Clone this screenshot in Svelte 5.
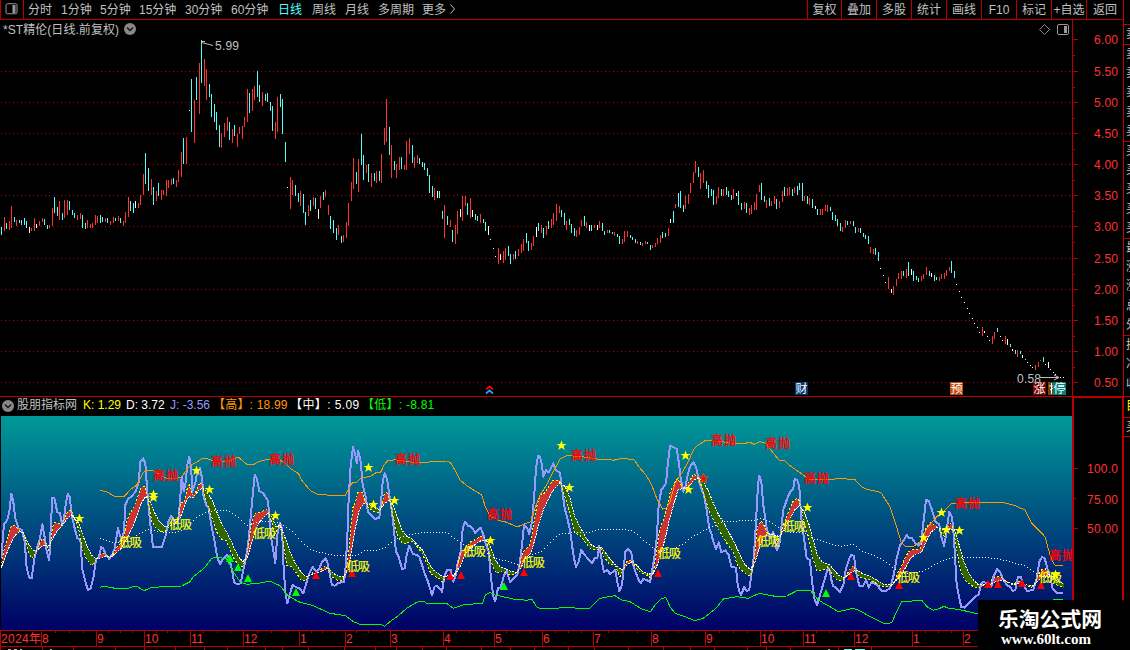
<script>
  const periods = [
    ['分时', 33], ['1分钟', 39], ['5分钟', 39], ['15分钟', 46], ['30分钟', 46], ['60分钟', 47],
    ['日线', 34], ['周线', 33], ['月线', 33], ['多周期', 44], ['更多', 27],
  ];
  const tools = ['复权', '叠加', '多股', '统计', '画线', 'F10', '标记', '+自选', '返回'];

  // x, high, low, kind (r = up, c = down, w = flat)
  const bars = `1,227,235,c 4,217,231,r 6,223,229,c 9,221,230,r 11,206,228,r 14,217,222,c 16,220,226,r 19,220,223,c 21,220,225,c 24,218,225,c 26,221,228,c 29,227,233,w 31,228,231,r 34,218,231,r 36,224,228,w 39,221,226,r 42,218,222,r 44,219,225,c 47,225,229,c 49,225,228,r 52,208,226,r 54,197,213,c 57,207,216,c 59,201,220,r 62,213,220,c 64,200,218,r 67,200,215,r 69,201,210,c 72,210,215,c 74,213,218,c 77,215,220,r 80,213,219,r 82,215,228,c 85,223,229,c 87,220,228,r 90,224,228,r 92,223,228,r 95,215,225,r 97,216,223,r 100,215,223,c 102,217,222,c 105,218,222,r 107,218,223,c 110,221,225,r 113,217,223,r 115,218,221,c 118,216,221,r 120,218,223,c 123,221,226,r 125,212,223,r 128,197,217,r 130,201,211,c 133,203,213,c 135,201,208,w 138,203,208,r 140,195,205,r 143,174,195,r 145,153,184,c 148,168,191,c 151,179,195,r 153,187,205,c 156,191,201,r 158,183,196,c 161,190,200,r 163,190,195,r 166,180,196,r 168,180,188,r 171,179,185,r 173,178,184,c 176,180,187,r 178,170,182,r 181,152,177,r 183,138,164,c 186,137,164,r 189,110,111,w 191,79,132,c 194,100,143,r 196,77,100,c 199,63,114,r 201,40,83,c 204,59,86,r 206,69,100,r 209,84,97,c 211,94,117,c 214,104,122,c 216,112,130,c 219,125,147,c 221,133,148,r 224,123,137,r 227,117,131,r 229,122,140,c 232,129,143,r 234,125,136,c 237,134,147,r 239,127,134,r 242,126,139,r 244,117,127,r 247,89,122,r 249,93,113,c 252,89,111,r 254,86,100,r 257,71,97,c 259,85,102,c 262,92,106,r 265,94,101,c 267,93,102,c 270,102,111,c 272,106,131,c 275,122,139,r 277,97,132,r 280,94,107,c 282,99,134,c 285,142,162,c 287,187,188,w 290,177,209,r 292,180,195,r 295,185,196,c 298,193,202,c 300,191,206,r 303,194,213,c 305,212,225,c 308,205,216,r 310,200,211,c 313,197,206,r 315,198,209,c 318,209,219,w 320,196,208,r 323,192,200,c 325,190,197,r 328,205,215,r 330,216,229,c 333,220,233,c 336,228,240,c 338,225,235,r 341,236,243,c 343,235,242,r 346,222,238,r 348,203,226,r 351,182,201,r 353,158,189,r 356,172,184,c 358,159,192,r 361,134,165,c 363,155,180,c 366,165,173,r 368,164,182,c 371,173,187,r 374,173,181,c 376,171,183,r 379,171,181,c 381,154,183,r 384,128,145,r 386,99,142,r 389,127,155,c 391,145,178,r 394,161,170,c 396,164,178,r 399,157,170,r 401,157,169,c 404,165,170,r 406,141,170,r 409,138,154,r 412,145,163,c 414,157,168,r 417,155,163,r 419,158,164,c 422,162,167,c 424,163,170,c 427,168,176,c 429,175,193,c 432,186,197,c 434,188,200,r 437,191,198,w 439,191,198,c 442,211,219,c 444,205,238,r 447,216,225,c 450,220,227,r 452,230,242,c 455,225,244,r 457,211,234,r 460,209,217,w 462,196,221,r 465,196,206,r 467,203,215,c 470,198,218,r 472,210,217,w 475,214,220,c 477,216,221,c 480,214,223,r 483,219,223,c 485,222,231,c 488,226,235,w 490,239,240,w 493,248,249,w 495,256,257,w 498,248,264,r 500,254,260,w 503,251,263,r 505,248,260,r 508,246,256,c 510,254,264,c 513,254,260,r 515,251,259,c 518,249,256,r 521,244,253,r 523,239,251,r 526,233,243,c 528,241,251,c 531,243,250,r 533,236,246,r 536,227,237,w 538,223,231,c 541,225,233,r 543,228,238,c 546,226,235,r 548,221,229,c 551,219,228,r 553,213,225,r 556,204,221,r 559,206,213,r 561,210,217,c 564,213,225,c 566,221,230,r 569,219,225,c 571,224,233,c 574,228,236,c 576,230,237,r 579,227,235,r 581,220,226,r 584,216,226,c 586,222,228,r 589,225,231,w 591,225,231,c 594,225,228,r 597,225,230,w 599,221,228,r 602,223,231,c 604,231,235,c 607,230,233,r 609,230,233,c 612,232,234,c 614,232,236,r 617,234,237,c 619,236,244,c 622,239,244,r 624,231,242,r 627,231,237,r 630,235,238,c 632,237,240,c 635,239,243,c 637,241,244,r 640,242,245,c 642,243,246,r 645,241,244,r 647,242,244,c 650,245,250,c 652,245,248,r 655,243,247,r 657,238,244,r 660,235,243,r 662,232,238,c 665,233,237,c 668,228,236,r 670,219,223,w 673,211,223,c 675,204,208,r 678,193,207,c 680,191,208,c 683,205,212,c 685,196,209,r 688,194,204,r 690,183,193,r 693,172,183,r 695,161,173,r 698,167,177,c 700,173,189,r 703,170,183,r 706,181,189,c 708,185,198,c 711,189,196,c 713,190,205,c 716,196,204,r 718,187,198,r 721,189,196,c 723,189,196,r 726,187,195,c 728,191,197,c 731,195,200,c 733,189,199,r 736,193,196,w 738,191,205,c 741,203,210,c 744,202,209,r 746,203,213,c 749,208,215,r 751,205,214,r 754,202,210,r 756,194,210,r 759,185,192,r 761,183,200,c 764,196,202,c 766,200,208,r 769,198,206,c 771,201,206,r 774,196,204,r 776,199,209,c 779,201,208,r 782,191,202,r 784,187,196,c 787,188,196,r 789,187,195,r 792,189,196,c 794,187,193,r 797,186,195,c 799,183,190,c 802,183,201,c 804,196,201,r 807,196,204,c 809,198,205,r 812,199,208,c 815,206,209,w 817,209,215,c 820,209,215,r 822,209,215,r 825,205,211,r 827,205,212,r 830,207,211,c 832,212,220,c 835,215,221,c 837,219,226,c 840,223,231,c 842,227,232,r 845,220,228,r 847,221,225,c 850,221,224,r 853,221,226,c 855,227,233,c 858,228,232,r 860,228,233,c 863,233,237,c 865,235,239,c 868,236,244,c 870,247,253,r 873,249,254,r 875,248,255,c 878,252,261,c 880,268,269,w 883,275,276,w 885,282,283,w 888,277,289,r 891,289,293,w 893,286,295,r 896,279,286,r 898,273,279,r 901,271,279,r 903,271,276,c 906,269,278,r 908,262,276,c 911,269,275,w 913,271,281,c 916,276,280,c 918,278,282,c 921,276,281,r 923,274,279,r 926,267,275,r 929,271,276,c 931,273,277,w 934,275,281,c 936,277,280,c 939,277,281,r 941,274,279,r 944,273,279,r 946,270,276,r 949,267,271,r 951,261,273,c 954,271,278,c 956,284,285,w 959,291,292,w 961,297,298,w 964,302,303,w 967,308,309,w 969,313,314,w 972,318,319,w 974,323,324,w 977,327,328,w 979,332,333,w 982,327,336,r 984,331,333,w 987,336,337,w 989,340,341,w 992,336,344,r 994,332,339,r 997,328,332,c 1000,336,337,w 1002,340,341,w 1005,336,344,r 1007,339,345,w 1010,344,347,c 1012,349,351,w 1015,350,354,c 1017,350,357,r 1020,351,354,c 1022,355,358,w 1025,359,360,c 1027,362,363,w 1030,365,366,w 1032,367,368,w 1035,365,370,r 1038,362,367,r 1040,360,361,r 1043,357,362,c 1045,364,365,w 1048,362,368,w 1050,369,370,w 1053,372,373,w 1055,374,375,w 1058,377,378,w 1060,377,378,w 1063,377,378,w`
    .split(' ').map((s) => { const [x, a, b, k] = s.split(','); return { x: +x, a: +a, b: +b, k }; });

  const prices = [['6.00', 39], ['5.50', 71], ['5.00', 102], ['4.50', 133], ['4.00', 164], ['3.50', 195], ['3.00', 226], ['2.50', 258], ['2.00', 289], ['1.50', 320], ['1.00', 351], ['0.50', 382]];

  // Series are kept in four blocks on a 1/3-pixel lattice, each with its own x origin.
  const origins = [0, 280, 560, 830];
  function series(blocks) {
    const out = [];
    blocks.forEach((b, i) => {
      const limit = i < 3 ? origins[i + 1] : 2000;
      for (const p of b.split(' ')) {
        const [x, y] = p.split(',').map(Number);
        const px = origins[i] + x / 3;
        if (px < limit && (!out.length || px > out[out.length - 1][0])) out.push([px, 395 + y / 3]);
      }
    });
    return out;
  }
  const str = (s) => s.map((p) => p[0].toFixed(1) + ',' + p[1].toFixed(1)).join(' ');
  function at(s, x) {
    let i = 1;
    while (i < s.length - 1 && s[i][0] < x) i++;
    const [x0, y0] = s[i - 1], [x1, y1] = s[i];
    return y0 + ((y1 - y0) * (x - x0)) / (x1 - x0);
  }

  const J = series([
    '4,490 12,388 22,375 28,350 34,296 40,320 46,370 56,400 66,405 74,440 80,520 88,548 95,550 103,492 112,455 120,430 127,388 133,420 140,470 148,495 152,400 157,308 163,308 172,352 180,354 186,390 192,370 197,330 203,296 209,305 216,365 224,400 232,430 241,432 247,522 256,560 264,585 272,580 280,550 288,492 296,488 304,456 310,460 318,480 328,492 336,480 344,460 354,400 364,435 372,410 376,330 384,312 396,303 408,288 416,260 421,200 430,190 436,205 442,290 450,380 459,455 470,455 486,455 496,425 505,380 514,362 524,378 534,384 540,320 545,245 551,288 556,270 562,210 568,186 574,220 576,290 586,265 592,230 600,220 606,248 610,300 618,330 626,340 634,390 644,440 652,488 660,508 670,490 682,480 690,498 696,525 702,562 712,568 722,565 730,525 736,500 744,450 750,390 758,300 764,240 770,250 778,288 790,295 804,318 808,360 814,430 826,505 832,420 839,385',
    '0,385 6,400 10,500 16,590 22,625 30,595 38,570 48,576 58,580 70,595 80,560 90,530 98,516 108,530 118,520 126,500 136,490 142,500 150,540 156,570 164,572 174,565 184,562 192,562 196,530 202,430 206,310 212,210 219,156 226,180 230,205 235,168 242,200 248,270 256,300 264,350 274,362 284,372 298,368 304,310 308,260 314,235 322,255 328,300 334,335 340,385 348,470 356,485 366,522 374,520 380,480 388,452 398,476 410,480 418,485 426,510 434,535 444,560 456,600 464,575 472,572 486,590 494,540 502,525 512,525 520,560 526,545 534,500 542,470 548,400 556,380 564,392 574,395 586,414 594,405 602,398 612,425 618,450 626,470 632,540 640,605 646,618 654,580 662,578 672,540 680,528 690,560 700,550 712,540 720,500 726,450 732,390 742,400 748,418 756,380 762,310 768,220 774,182 780,185 786,210 790,245 798,225 806,232 814,218 820,205 828,225 838,232',
    '0,235 6,280 14,340 22,370 30,405 36,450 42,490 48,515 56,500 64,465 74,480 86,494 96,505 104,490 112,490 118,452 124,490 132,532 142,525 150,537 160,530 166,525 172,560 178,588 186,570 192,510 196,470 204,462 214,472 220,510 228,535 236,555 242,565 250,552 260,555 270,562 276,530 284,480 290,430 296,330 304,285 318,265 324,200 330,153 340,156 350,162 356,200 362,250 370,290 376,275 382,245 390,215 400,202 408,215 416,255 424,280 432,300 440,345 448,400 454,415 460,440 468,462 476,442 484,472 496,466 506,480 514,515 528,518 532,560 538,590 544,600 552,576 560,588 568,585 574,540 582,480 588,380 594,270 598,242 604,260 610,330 620,400 630,430 640,410 650,465 658,450 664,400 670,345 682,310 692,288 700,280 704,252 712,256 718,275 724,370 732,430 740,490 750,495 756,560 764,615 772,630 780,600 792,560 804,518',
    '0,530 4,555 10,573 20,580 30,590 40,570 48,520 58,490 64,480 72,482 78,530 88,572 100,572 108,555 116,578 124,562 140,568 154,587 168,587 180,580 190,545 200,490 210,450 222,435 230,420 238,430 246,430 256,445 266,452 274,440 280,385 284,350 288,315 296,318 306,345 316,380 328,388 334,425 342,453 348,420 354,375 358,350 366,365 372,430 376,500 380,570 388,610 394,636 404,638 416,625 432,608 446,598 454,565 462,560 474,570 484,575 490,545 502,522 512,535 518,550 530,570 540,575 548,588 556,585 564,545 572,545 580,570 592,588 610,585 620,550 628,500 636,486 644,490 652,520 662,550 668,582 680,594 700,594',
  ]);
  const K = series([
    '4,515 12,465 22,430 30,400 38,390 48,395 58,408 68,412 78,445 86,475 96,490 104,480 112,462 120,442 128,430 138,445 146,465 152,445 158,395 164,382 176,386 186,388 196,365 204,348 214,345 220,362 230,385 238,410 246,460 258,490 274,512 284,500 296,482 308,474 318,480 328,488 340,475 352,455 362,445 372,425 380,380 390,355 402,335 412,310 422,280 432,273 440,290 448,340 456,380 468,400 484,410 496,410 504,398 516,390 530,385 538,350 542,322 552,322 562,280 568,270 576,300 588,290 600,262 608,275 616,310 628,345 640,380 652,415 664,432 680,438 690,465 704,495 718,512 728,514 736,495 746,450 754,390 764,355 776,352 790,348 800,342 808,360 816,385 824,420 834,400',
    '0,390 8,430 20,512 34,515 50,535 62,555 78,556 90,540 100,532 112,538 124,522 136,512 146,525 156,545 170,555 188,556 198,530 206,470 212,400 220,330 226,325 234,292 246,292 256,320 266,340 280,348 296,354 304,335 312,300 320,292 328,315 336,350 344,385 352,420 366,445 380,446 390,438 402,442 414,458 426,475 438,500 452,535 466,545 478,550 488,562 496,545 508,540 520,545 530,525 540,480 548,465 560,455 572,440 586,434 600,425 610,422 620,440 628,480 638,515 648,535 664,528 676,532 690,540 704,538 716,525 724,485 734,465 746,455 754,430 762,380 770,335 780,300 792,296 806,275 818,255 836,255',
    '0,260 10,290 22,325 32,365 44,415 60,420 74,440 92,462 112,465 122,460 132,485 146,505 164,510 180,545 192,515 202,498 216,494 226,515 240,532 258,540 272,548 282,525 292,450 300,400 312,370 322,335 330,295 342,265 352,250 362,268 372,280 386,262 402,236 414,250 424,270 434,305 446,345 458,370 472,395 488,425 504,450 520,470 532,510 544,525 562,540 572,542 580,515 586,460 592,395 604,378 614,395 624,420 640,415 652,440 662,420 672,385 684,355 698,320 710,310 718,318 726,350 738,400 748,440 758,490 770,525 790,525 804,515',
    '0,528 12,545 24,558 38,556 50,540 60,522 70,512 80,535 92,548 110,550 130,560 150,572 172,576 190,570 202,535 214,515 224,490 236,470 250,462 270,462 280,425 288,398 302,382 316,392 326,400 336,418 344,425 352,400 362,385 370,400 378,450 388,510 398,545 412,562 430,575 446,578 460,570 476,572 488,550 504,545 520,550 534,562 550,570 560,560 572,558 586,570 604,578 616,565 624,540 634,525 646,522 656,540 670,565 684,572 700,578',
  ]);
  const D = series([
    '4,520 18,480 30,450 44,422 58,410 70,412 82,440 96,462 108,470 120,458 134,450 148,452 158,430 170,410 186,392 200,372 214,360 224,370 236,385 250,425 262,455 276,482 292,492 308,486 320,484 336,484 350,472 364,460 380,430 396,400 410,365 424,325 438,303 450,320 462,350 478,380 494,395 508,392 524,385 540,370 554,330 566,305 580,308 596,285 608,280 620,290 636,315 650,350 664,385 680,412 696,445 712,480 728,500 742,488 756,440 770,395 784,375 804,355 816,365 828,395',
    '0,390 14,425 30,470 46,505 62,530 78,545 90,540 104,536 124,530 144,518 160,535 178,545 192,546 204,525 214,470 226,400 238,345 252,325 266,328 284,338 300,345 314,325 328,315 340,330 352,365 366,405 380,425 396,432 412,450 428,465 444,500 460,525 478,538 490,545 506,542 524,540 540,515 554,480 570,460 590,445 606,435 620,435 632,455 646,495 660,515 676,520 694,530 710,532 722,520 736,490 752,475 766,430 778,380 792,340 806,310 820,285 838,266',
    '0,262 16,275 30,310 44,365 60,395 76,425 94,450 112,458 124,456 140,478 156,500 172,515 186,525 200,510 216,500 230,510 246,528 264,538 280,535 292,510 304,470 316,430 328,375 342,325 354,285 370,280 386,275 402,255 416,248 430,260 446,290 460,325 476,360 492,385 508,415 524,445 540,480 556,510 572,525 586,500 600,450 612,425 628,415 642,420 660,425 674,400 690,370 704,345 718,332 732,350 746,385 758,430 772,480 786,500 804,508',
    '0,510 16,530 30,545 46,548 64,532 80,525 96,535 120,543 140,555 160,568 184,570 200,555 214,540 228,515 242,490 256,478 276,470 288,440 302,412 320,398 336,402 348,405 362,402 374,405 386,445 400,495 414,530 430,555 444,568 460,568 480,570 496,560 520,555 536,562 556,568 572,565 590,570 608,572 622,560 636,545 656,538 670,548 684,560 700,565',
  ]);
  const high = series([
    '300,286 320,290 345,305 372,305 390,285 410,270 430,232 440,226 458,226 480,240 500,250 525,252 545,245 570,212 590,202 606,190 625,192 640,198 690,198 715,186 740,208 758,210 775,200 800,194 839,193',
    '0,196 16,204 30,220 56,236 64,254 90,286 110,297 140,300 196,300 205,285 218,262 230,262 244,248 270,245 290,232 302,232 312,210 322,198 345,194 380,200 410,203 500,198 512,204 525,225 540,255 560,272 605,300 616,335 630,362 655,376 680,382 712,396 730,388 752,380 765,340 780,300 800,270 820,230 835,202',
    '0,192 20,182 60,184 110,192 140,192 160,196 185,190 222,194 240,220 258,240 275,270 290,310 308,342 320,338 330,320 345,265 368,230 385,200 400,165 415,150 435,137 470,137 510,144 555,145 570,142 582,148 600,140 618,145 640,175 658,196 672,196 690,212 730,240 745,252 800,254',
    '0,255 28,250 75,254 95,275 110,283 152,292 180,335 195,380 213,440 225,454 250,454 272,440 290,400 320,365 345,345 365,325 450,322 515,322 550,330 585,345 605,385 645,425 660,480 672,508 680,512 700,512',
  ]);
  const low = series([
    '300,578 310,573 345,580 380,582 398,575 412,575 432,587 455,577 525,574 545,573 570,560 580,545 612,520 635,490 650,485 680,492 700,530 720,560 740,568 775,565 810,558',
    '0,572 22,600 55,620 100,632 150,655 196,662 220,680 240,688 300,688 314,694 330,680 355,662 380,640 410,622 430,618 440,625 500,625 520,640 550,630 608,624 616,600 630,592 645,600 700,612 740,616 756,612 770,636 785,642 835,640',
    '0,638 90,640 120,610 165,602 185,615 210,620 245,642 272,650 285,630 305,610 318,608 330,635 345,655 375,665 405,677 430,670 470,638 490,612 530,605 565,610 598,595 645,604 680,603 715,585 750,585 775,615 800,630',
    '0,635 25,650 70,640 85,645 130,670 165,687 185,683 200,650 215,620 275,616 292,636 310,646 330,640 342,634 355,640 385,643 445,657',
  ]);
  const mid = series([
    '300,430 345,442 372,440 400,425 430,408 445,402 470,408 500,412 540,408 565,388 590,365 615,352 640,345 680,345 710,362 740,390 765,382 790,376 835,382',
    '0,385 40,412 65,440 90,462 125,472 165,480 230,480 250,466 290,466 315,455 340,435 380,418 420,412 500,412 530,435 560,455 600,460 630,480 650,490 690,500 712,506 730,495 755,478 780,470 800,450 830,420',
    '0,415 40,411 85,412 110,402 190,401 220,408 250,435 290,465 330,463 360,450 400,422 440,400 490,378 580,375 600,370 630,380 670,405 700,412 730,412 760,430 800,440',
    '0,445 30,452 70,446 90,466 125,478 160,495 200,525 225,535 275,528 300,515 330,498 365,485 500,488 540,500 580,510 610,530 640,545 680,545',
  ]);

  // Ribbon between K and D, one column per pixel.
  let redPath = '', greenPath = '';
  for (let x = 2; x < 1064; x++) {
    const k = Math.round(at(K, x)), d = Math.round(at(D, x));
    if (k < d) redPath += `M${x} ${k}h1V${d}h-1z`;
    else if (k > d) greenPath += `M${x} ${d}h1V${k}h-1z`;
  }

  // The middle band is a row of single-pixel dots, three pixels apart.
  let midPath = '';
  for (let x = 100; x < 1057; x += 3) midPath += `M${x} ${Math.round(at(mid, x))}h1v1h-1z`;

  const sell = [[153, 469], [211, 455], [269, 453], [395, 453], [487, 508], [571, 449], [711, 434], [765, 437], [804, 472], [955, 497], [1049, 549]];
  const buy = [[119, 536], [169, 518], [253, 527], [347, 560], [463, 545], [522, 556], [658, 547], [757, 535], [783, 520], [897, 571], [1039, 571]];
  const stars = [[79, 518], [153, 494], [153, 497], [196, 470], [209, 489], [275, 515], [368, 467], [373, 504], [394, 500], [490, 540], [561, 445], [569, 487], [685, 455], [688, 489], [807, 507], [923, 537], [941, 512], [946, 529], [959, 530], [1055, 574]];
  const upGreen = [[230, 558], [238, 567], [248, 578], [296, 592], [504, 586], [826, 593]];
  const upRed = [[316, 575], [352, 573], [450, 576], [461, 575], [524, 572], [658, 573], [851, 576], [899, 585], [988, 584], [998, 584], [1022, 583], [1041, 585]];
  const starPath = 'M0-5L1.3-1.6H5L2.1.6 3.3 4.4 0 2.2-3.3 4.4-2.1.6-5-1.6H-1.3Z';

  const months = [[41, '8'], [96, '9'], [144, '10'], [190, '11'], [243, '12'], [299, '1'], [345, '2'], [390, '3'], [443, '4'], [494, '5'], [542, '6'], [593, '7'], [651, '8'], [705, '9'], [760, '10'], [803, '11'], [854, '12'], [912, '1'], [963, '2']];
  const minor = months.slice(0, -1).flatMap(([x], i) => {
    const w = months[i + 1][0] - x;
    return [0.25, 0.5, 0.76].map((f) => Math.round(x + w * f));
  });
  const lowerTicks = [0, 42, 73, 115, 144, 175, 204, 227, 265, 282, 308, 344, 375, 396, 422, 446, 481, 510, 534, 568, 594, 628, 663, 690, 714, 747, 766, 790, 838, 871];

  const strip = [
    { h: 25, t: '' }, { h: 20, t: '卖' }, { h: 97, t: '卖卖卖卖卖' }, { h: 97, t: '买买买买买' },
    { h: 97, t: '最涨涨总外' }, { h: 61, t: '换净收' }, { h: 21, t: '目', y: true }, { h: 19, t: '买' },
  ];
</script>

<div class="app">
  <div class="main">
    <header class="bar">
      <span class="toggle">
        <svg width="13" height="12" viewBox="0 0 13 12" fill="none">
          <rect x="1" y=".75" width="11" height="10" rx="1.5" stroke="#999" />
          <rect x="7.500" y="2" width="3" height="8" fill="#999" />
        </svg>
      </span>
      <nav>
        {#each periods as [t, w]}
          <span class:active={t === '日线'} style="width:{w}px">{t}</span>
        {/each}
        <svg class="more" width="8" height="10" viewBox="0 0 8 10"><path d="M1.500 .5L5.500 5L1.500 9.500" fill="none" stroke="#c0c0c0" /></svg>
      </nav>
      <div class="tools">
        {#each tools as t}<span>{t}</span>{/each}
      </div>
    </header>

    <svg class="pane" width="1123" height="377" viewBox="0 20 1123 377">
      <g class="grid">
        {#each prices.slice(1) as [, y]}
          <line x1="1" x2="1070" y1={y + 0.5} y2={y + 0.5} />
        {/each}
      </g>
      <g shape-rendering="crispEdges">
        {#each bars as b}<rect x={b.x} y={b.a} width="1" height={b.b - b.a} class={b.k} />{/each}
      </g>
      <g class="frame">
        <rect x="1072" y="20" width="1" height="376" />
        <rect x="0" y="396" width="1123" height="1" />
        {#each prices as [, y], i}
          <rect x="1073" {y} width="5" height="1" />
          {#if i < prices.length - 1}<rect x="1073" y={y + 16} width="2" height="1" />{/if}
        {/each}
      </g>
      <g class="axis">
        {#each prices as [t, y]}<text x="1094" y={y + 5} textLength="24">{t}</text>{/each}
      </g>
      <g class="gray">
        <text x="3" y="34" textLength="116">*ST精伦(日线.前复权)</text>
        <text x="215" y="50" textLength="24">5.99</text>
        <text x="1017" y="383" textLength="24">0.58</text>
        <path d="M201.500 46V41.500H205M201.500 42.500L213 45.500M1040 377.500H1059M1054 375L1059 377.500L1054 380" fill="none" stroke="#c0c0c0" />
      </g>
      <circle cx="130" cy="29" r="6" fill="#888" />
      <path d="M127 27.500L130 30.500L133 27.500" fill="none" stroke="#111" stroke-width="1.300" />
      <path d="M1044.500 24.500L1049.500 29.500L1044.500 34.500L1039.500 29.500Z" fill="none" stroke="#888" />
      <rect x="1057.500" y="24.500" width="11" height="10" rx="1.500" fill="none" stroke="#999" />
      <rect x="1064" y="26" width="3" height="7" fill="#999" />
      <path d="M486 389.500L489.500 386.500L493 389.500" stroke="#f00" stroke-width="1.800" fill="none" />
      <path d="M486 393.500L489.500 390.500L493 393.500" stroke="#39f" stroke-width="1.800" fill="none" />
      <g class="badge">
        <rect x="795" y="382" width="13" height="13" fill="#003a70" /><text x="801.500" y="393">财</text>
        <rect x="950" y="382" width="13" height="13" fill="#c04a10" /><text x="956.500" y="393">预</text>
        <rect x="1033" y="382" width="13" height="13" fill="#800000" /><text x="1039.500" y="393">涨</text>
        <rect x="1048" y="382" width="6" height="13" fill="#804000" /><path d="M1049 386H1053M1051.500 383V394M1050 390L1053 388" stroke="#fff" />
        <rect x="1053" y="382" width="13" height="13" fill="#008080" /><text x="1059.500" y="393">停</text>
      </g>
    </svg>

    <div class="legend">
      <svg width="14" height="14" viewBox="0 0 14 14"><circle cx="7" cy="7" r="6" fill="#888" /><path d="M4 5.500L7 8.500L10 5.500" fill="none" stroke="#111" stroke-width="1.300" /></svg>
      <span style="width:66px">股朋指标网</span>
      <span class="k" style="width:43px">K: 1.29</span>
      <span class="d" style="width:44px">D: 3.72</span>
      <span class="j" style="width:44px">J: -3.56</span>
      <span class="h" style="width:77px">【高】: 18.99</span>
      <span class="d wide" style="width:72px">【中】: 5.09</span>
      <span class="l">【低】: -8.81</span>
    </div>

    <svg class="pane" width="1123" height="234" viewBox="0 416 1123 234">
      <defs>
        <linearGradient id="sea" x1="0" y1="0" x2="0" y2="1"><stop offset="0" stop-color="#009999" /><stop offset="1" stop-color="#000066" /></linearGradient>
        <clipPath id="plot"><rect x="1" y="416" width="1071" height="214" /></clipPath>
      </defs>
      <rect x="1" y="416" width="1071" height="214" fill="url(#sea)" />
      <g clip-path="url(#plot)">
        <g shape-rendering="crispEdges" fill="none">
          <path d={redPath} fill="#cc3333" />
          <path d={greenPath} fill="#336600" />
          <polyline points={str(J)} stroke="#9999ff" stroke-width="2" stroke-linejoin="round" />
          <polyline points={str(K)} stroke="#ffff00" stroke-dasharray="2 2" />
          <polyline points={str(D)} stroke="#ffffff" stroke-dasharray="2 1" />
          <path d={midPath} fill="#ffffff" />
          <polyline points={str(high)} stroke="#ff9900" />
          <polyline points={str(low)} stroke="#00ff00" />
          <path d="M1053 599.500H1063" stroke="#00ff00" />
        </g>
        {#each upGreen as [x, y]}<path d="M{x} {y - 4}L{x + 4} {y + 4}H{x - 4}Z" fill="#00ff00" />{/each}
        {#each upRed as [x, y]}<path d="M{x} {y - 4}L{x + 4} {y + 4}H{x - 4}Z" fill="#ff0000" />{/each}
        <g class="sell">{#each sell as [x, y]}<text {x} y={y + 11} textLength="25">高抛</text>{/each}</g>
        <g class="buy">{#each buy as [x, y]}<text {x} y={y + 11} textLength="23">低吸</text>{/each}</g>
        {#each stars as [x, y]}<path d={starPath} transform="translate({x + 0.5} {y + 0.5})" fill="#ffff00" />{/each}
        <path d={starPath} transform="translate(703.500 478.500)" fill="#ff0000" stroke="#d97a20" stroke-width=".6" />
      </g>
      <g class="frame">
        <rect x="1072" y="416" width="2" height="214" />
        <rect x="1122" y="416" width="1" height="234" />
        <rect x="0" y="630" width="1072" height="1" />
        <rect x="0" y="646" width="1072" height="1" />
        <rect x="0" y="630" width="1" height="20" />
        <rect x="1074" y="468" width="4" height="1" />
        <rect x="1074" y="498" width="2" height="1" />
        <rect x="1074" y="528" width="4" height="1" />
        {#each months as [x]}<rect {x} y="630" width="1" height="16" />{/each}
        {#each minor as x}<rect {x} y="631" width="1" height="2" />{/each}
        {#each lowerTicks as x}<rect {x} y="647" width="1" height="3" />{/each}
      </g>
      <g class="axis">
        <text x="1087" y="473" textLength="31">100.0</text>
        <text x="1087" y="504" textLength="31">75.00</text>
        <text x="1087" y="533" textLength="31">50.00</text>
        <text x="1" y="643" textLength="40">2024年</text>
        {#each months as [x, t]}<text x={x + 1} y="643">{t}</text>{/each}
      </g>
      <path d="M8 649.500H11M14 649.500H17M20 649.500H22M50 649.500H52M828 649.500H830" stroke="#aaa" />
      <path d="M844 649.500H852M855 649.500H865" stroke="#5ff" />
    </svg>
  </div>

  <aside>
    {#each strip as s}
      <div class:yellow={s.y} style="height:{s.h}px">{#each s.t as c}<span>{c}</span>{/each}</div>
    {/each}
  </aside>

  <div class="mark">
    <b>乐淘公式网</b>
    <i>www.60lt.com</i>
  </div>
</div>

<style>
  :global(body) { background: #000; overflow: hidden; }
  .app {
    position: relative; display: grid; grid-template-columns: 1123px 7px;
    width: 1130px; height: 650px; overflow: hidden; background: #000; color: #c0c0c0;
    font: 12px/19px "Liberation Sans", "Noto Sans CJK SC", sans-serif;
  }
  .main { display: flex; flex-direction: column; }
  .bar { display: flex; box-sizing: border-box; height: 20px; border-bottom: 1px solid #b80000; white-space: nowrap; }
  .toggle { box-sizing: border-box; width: 24px; padding: 3px 0 0 4px; border: solid #b80000; border-width: 0 1px; line-height: 0; }
  nav { display: flex; padding-left: 4px; line-height: 20px; }
  nav span { display: block; }
  .active { color: #55ffff; }
  .more { margin-top: 4px; }
  .tools { display: flex; margin-left: auto; line-height: 20px; }
  .tools span { box-sizing: border-box; width: 35px; height: 19px; border-left: 1px solid #b80000; text-align: center; }
  .tools span:first-child { width: 34px; }
  .tools span:last-child { width: 37px; }
  .pane { display: block; flex: none; }
  .grid line { stroke: #b00000; stroke-width: 1; stroke-dasharray: 1 3; }
  .r { fill: #ff3232; }
  .c { fill: #54fcfc; }
  .w { fill: #fff; }
  .frame { fill: #b80000; shape-rendering: crispEdges; }
  .axis { fill: #ff3232; }
  .gray { fill: #c0c0c0; }
  .badge { fill: #fff; text-anchor: middle; }
  .legend {
    display: flex; align-items: center; box-sizing: border-box; height: 19px; padding-left: 1px;
    border-right: 1px solid #b80000; white-space: nowrap; line-height: 17px;
    background:
      linear-gradient(#b80000, #b80000) 1072px 0 / 2px 19px no-repeat,
      linear-gradient(#b80000, #b80000) 1072px 0 / 51px 1px no-repeat;
  }
  .legend span { height: 19px; }
  .legend svg { margin: -2px 2px 0 0; }
  .k { color: #ff0; }
  .d { color: #fff; }
  .j { color: #9999ff; }
  .h { color: #ff9900; margin-left: -1px; letter-spacing: 0.2px; }
  .wide { letter-spacing: 0.4px; }
  .l { color: #0f0; letter-spacing: 0.25px; }
  .sell { fill: #ff0000; stroke: #ff0000; stroke-width: 0.3; }
  .buy { fill: #ffff00; stroke: #ffff00; stroke-width: 0.2; }
  aside { display: flex; flex-direction: column; border-left: 1px solid #b80000; overflow: hidden; }
  aside div {
    display: flex; flex-direction: column; box-sizing: border-box; flex: none; width: 20px;
    border-bottom: 1px solid #b80000; padding-left: 2px;
  }
  aside span { height: 19.4px; }
  .yellow { color: #ff0; }
  .mark {
    position: absolute; left: 978px; top: 600px; width: 152px; height: 50px;
    display: flex; flex-direction: column; box-sizing: border-box; padding: 7px 0 0 20px;
    background: #000; color: #fff; white-space: nowrap;
  }
  .mark b { font: 700 20.800px/23px "Noto Sans CJK SC", sans-serif; }
  .mark i { font: normal 700 15px/18px "Liberation Serif", serif; padding-left: 3px; }
</style>
